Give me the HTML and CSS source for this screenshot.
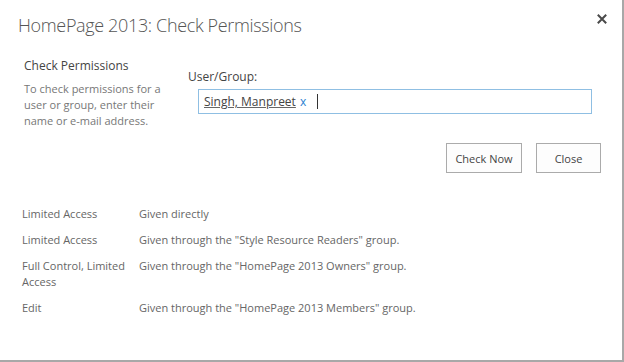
FILE: index.html
```html
<!DOCTYPE html>
<html>
<head>
<meta charset="utf-8">
<link rel="stylesheet" href="styles.css">
</head>
<body>
<div class="dialog">
  <div class="header">
    <h1 class="title">HomePage 2013: Check Permissions</h1>
    <span class="close-x" aria-label="Close">
      <svg width="10" height="10" viewBox="0 0 10 10"><path d="M0.8 0.8L9.2 9.2M9.2 0.8L0.8 9.2" stroke="#4a4a4a" stroke-width="2"/></svg>
    </span>
  </div>
  <div class="form">
    <div class="intro">
      <div class="intro-title">Check Permissions</div>
      <div class="intro-text">To check permissions for a user or group, enter their name or e-mail address.</div>
    </div>
    <div class="field">
      <div class="label">User/Group:</div>
      <div class="picker">
        <span class="entity">Singh, Manpreet</span><span class="remove">x</span><span class="caret"></span>
      </div>
    </div>
  </div>
  <div class="actions">
    <button class="btn btn-check">Check Now</button>
    <button class="btn btn-close">Close</button>
  </div>
  <div class="results">
    <div class="row"><div class="c1">Limited Access</div><div class="c2">Given directly</div></div>
    <div class="row"><div class="c1">Limited Access</div><div class="c2">Given through the "Style Resource Readers" group.</div></div>
    <div class="row"><div class="c1">Full Control, Limited Access</div><div class="c2">Given through the "HomePage 2013 Owners" group.</div></div>
    <div class="row"><div class="c1">Edit</div><div class="c2">Given through the "HomePage 2013 Members" group.</div></div>
  </div>
</div>
</body>
</html>
```
FILE: styles.css
```css
html, body {
  margin: 0;
  padding: 0;
  background: #fff;
}
body {
  font-family: "Open Sans", "Noto Sans", sans-serif;
  color: #444;
}
.dialog {
  width: 622px;
  height: 360px;
  border-right: 2px solid #a8a8a8;
  border-bottom: 2px solid #a8a8a8;
}
.header {
  display: flex;
  justify-content: space-between;
  align-items: flex-start;
  padding: 11px 15px 0 18px;
}
.title {
  margin: 0;
  font-weight: 300;
  font-size: 18px;
  line-height: 28px;
  color: #555;
  letter-spacing: -0.35px;
}
.close-x {
  display: block;
  margin-top: 3px;
  line-height: 0;
}
.form {
  display: flex;
  padding: 18px 0 0 24px;
}
.intro {
  width: 146px;
}
.intro-title {
  font-size: 12px;
  line-height: 18px;
  color: #444;
}
.intro-text {
  margin-top: 6px;
  font-size: 11px;
  line-height: 16px;
  color: #777;
}
.field {
  margin-left: 18px;
  margin-top: 12px;
}
.label {
  font-size: 12px;
  line-height: 16px;
  color: #444;
}
.picker {
  margin-top: 4px;
  margin-left: 10px;
  width: 387px;
  height: 23px;
  border: 1px solid #8fbfe3;
  display: flex;
  align-items: center;
  padding-left: 5px;
  font-size: 12px;
}
.entity {
  color: #444;
  text-decoration: underline;
  text-decoration-color: #666;
}
.remove {
  color: #2a7fd0;
  margin-left: 4px;
}
.caret {
  display: inline-block;
  width: 1px;
  height: 15px;
  background: #333;
  margin-left: 11px;
}
.actions {
  display: flex;
  justify-content: flex-end;
  gap: 14px;
  padding: 14px 21px 0 0;
}
.btn {
  font-family: "Open Sans", "Noto Sans", sans-serif;
  font-size: 11px;
  color: #444;
  background: #fdfdfd;
  border: 1px solid #ababab;
  height: 30px;
  padding: 0;
}
.btn-check { width: 76px; }
.btn-close { width: 65px; }
.results {
  padding: 33px 0 0 22px;
  font-size: 11px;
  line-height: 16px;
  color: #666;
}
.row {
  display: flex;
  margin-bottom: 10px;
}
.c1 {
  width: 112px;
  margin-right: 5px;
}
```
